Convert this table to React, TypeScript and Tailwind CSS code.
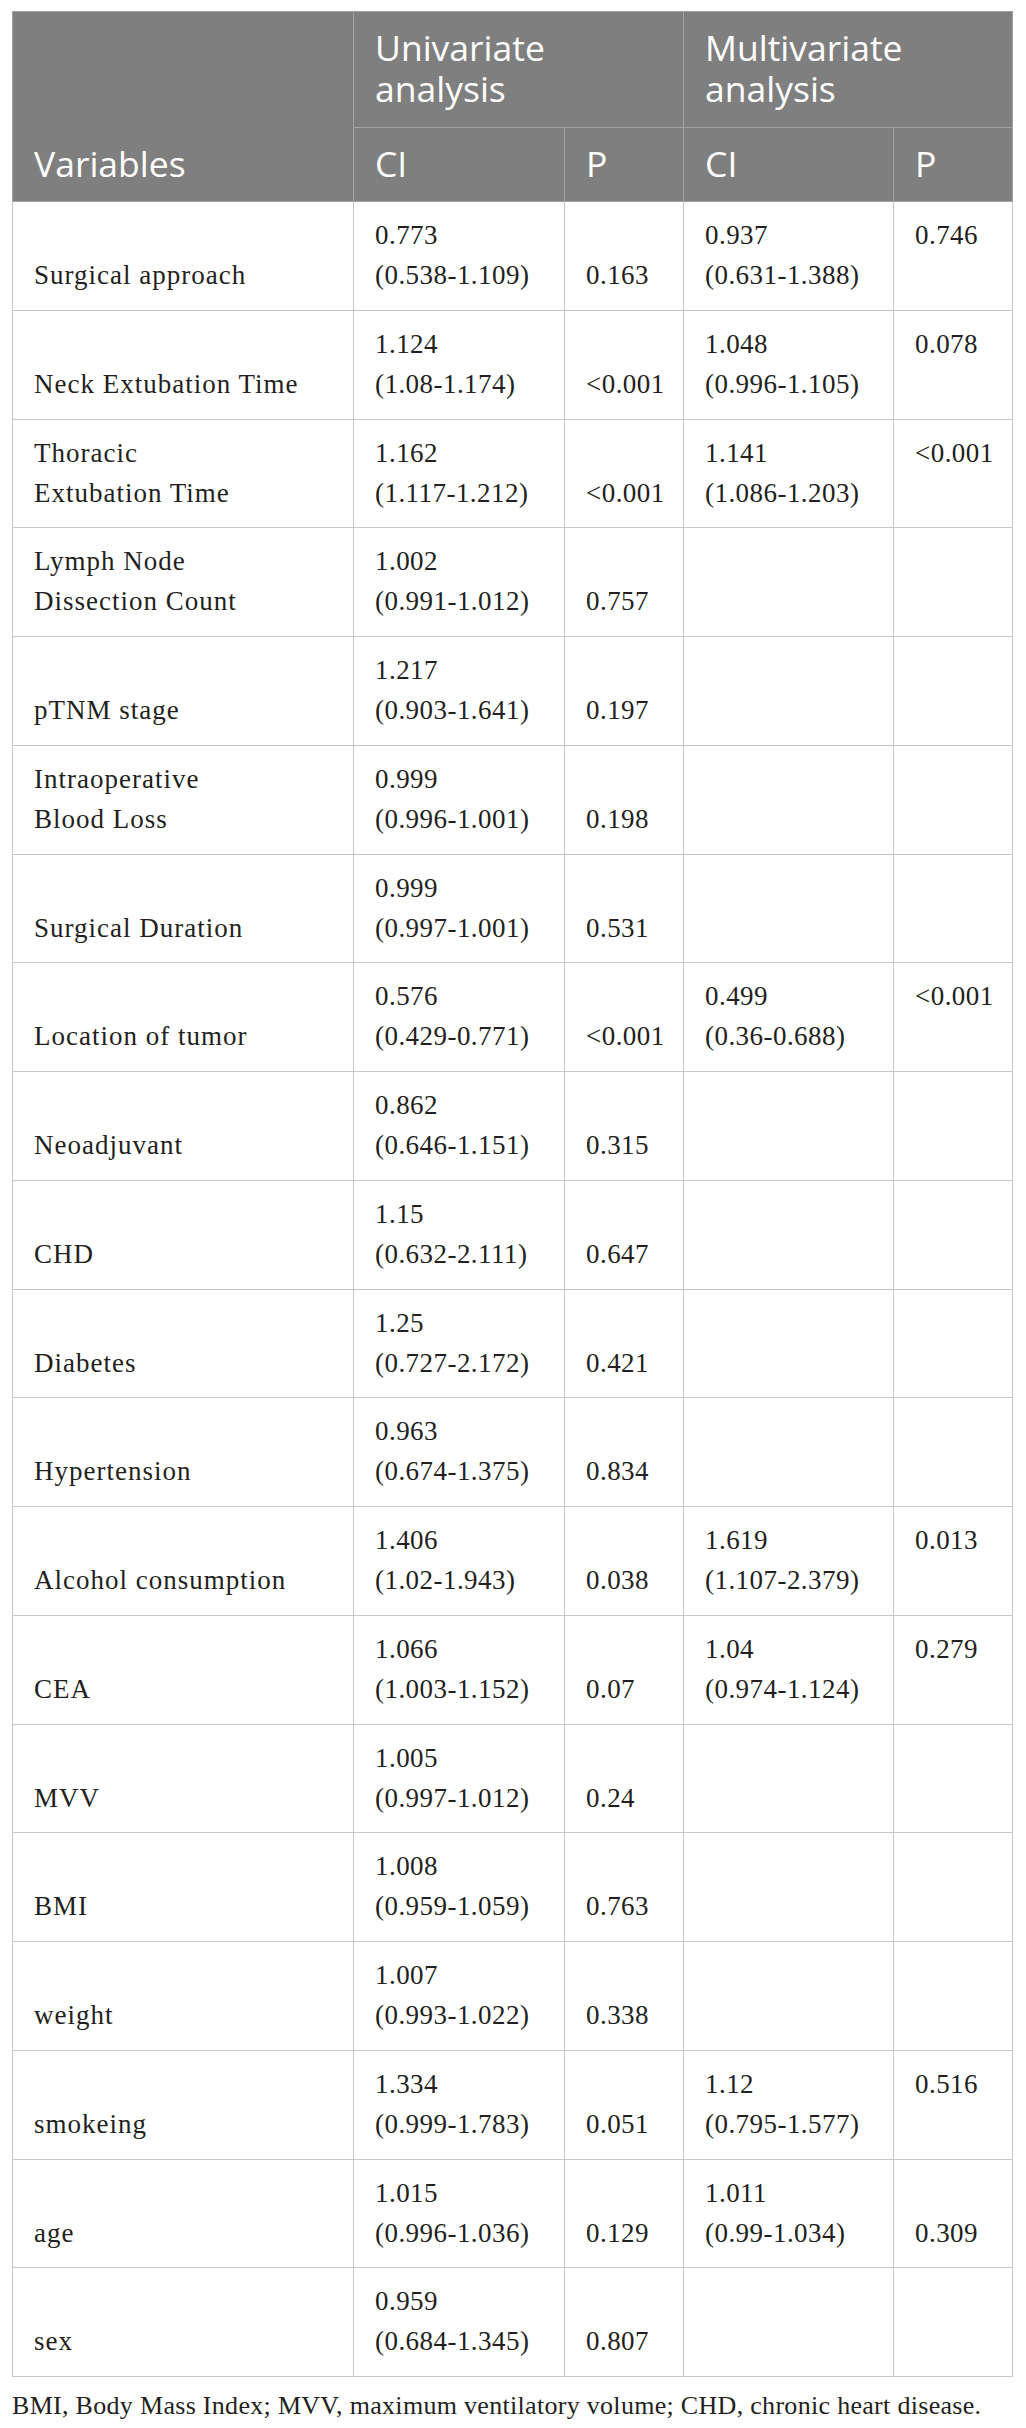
import React from "react";

type Row = {
  v: React.ReactNode;
  uci: [string, string];
  up: string;
  mci?: [string, string];
  mp?: string;
  mpBottom?: boolean;
};

const rows: Row[] = [
  { v: "Surgical approach", uci: ["0.773", "(0.538-1.109)"], up: "0.163", mci: ["0.937", "(0.631-1.388)"], mp: "0.746" },
  { v: "Neck Extubation Time", uci: ["1.124", "(1.08-1.174)"], up: "<0.001", mci: ["1.048", "(0.996-1.105)"], mp: "0.078" },
  { v: <>Thoracic<br />Extubation Time</>, uci: ["1.162", "(1.117-1.212)"], up: "<0.001", mci: ["1.141", "(1.086-1.203)"], mp: "<0.001" },
  { v: <>Lymph Node<br />Dissection Count</>, uci: ["1.002", "(0.991-1.012)"], up: "0.757" },
  { v: "pTNM stage", uci: ["1.217", "(0.903-1.641)"], up: "0.197" },
  { v: <>Intraoperative<br />Blood Loss</>, uci: ["0.999", "(0.996-1.001)"], up: "0.198" },
  { v: "Surgical Duration", uci: ["0.999", "(0.997-1.001)"], up: "0.531" },
  { v: "Location of tumor", uci: ["0.576", "(0.429-0.771)"], up: "<0.001", mci: ["0.499", "(0.36-0.688)"], mp: "<0.001" },
  { v: "Neoadjuvant", uci: ["0.862", "(0.646-1.151)"], up: "0.315" },
  { v: "CHD", uci: ["1.15", "(0.632-2.111)"], up: "0.647" },
  { v: "Diabetes", uci: ["1.25", "(0.727-2.172)"], up: "0.421" },
  { v: "Hypertension", uci: ["0.963", "(0.674-1.375)"], up: "0.834" },
  { v: "Alcohol consumption", uci: ["1.406", "(1.02-1.943)"], up: "0.038", mci: ["1.619", "(1.107-2.379)"], mp: "0.013" },
  { v: "CEA", uci: ["1.066", "(1.003-1.152)"], up: "0.07", mci: ["1.04", "(0.974-1.124)"], mp: "0.279" },
  { v: "MVV", uci: ["1.005", "(0.997-1.012)"], up: "0.24" },
  { v: "BMI", uci: ["1.008", "(0.959-1.059)"], up: "0.763" },
  { v: "weight", uci: ["1.007", "(0.993-1.022)"], up: "0.338" },
  { v: "smokeing", uci: ["1.334", "(0.999-1.783)"], up: "0.051", mci: ["1.12", "(0.795-1.577)"], mp: "0.516" },
  { v: "age", uci: ["1.015", "(0.996-1.036)"], up: "0.129", mci: ["1.011", "(0.99-1.034)"], mp: "0.309", mpBottom: true },
  { v: "sex", uci: ["0.959", "(0.684-1.345)"], up: "0.807" },
];

const th = "border border-[#a3a3a3] px-[21px] text-left font-normal text-white";
const td = "border border-[#c6c6c6] px-[21px] pt-[13px] pb-[14.75px]";

export default function App() {
  return (
    <div className="bg-white w-[1026px] pt-[11px] px-[12px]">
      <table
        className="w-[1000px] table-fixed border-collapse"
        style={{ fontFamily: "'Liberation Serif', serif" }}
      >
        <colgroup>
          <col className="w-[341px]" />
          <col className="w-[211px]" />
          <col className="w-[119px]" />
          <col className="w-[210px]" />
          <col className="w-[119px]" />
        </colgroup>
        <thead className="bg-[#7f7f7f] font-['Open_Sans',sans-serif] text-[35.5px] leading-[41px]">
          <tr>
            <th rowSpan={2} className={`${th} align-bottom pb-[17.5px]`}>Variables</th>
            <th colSpan={2} className={`${th} align-top pt-[14.5px] pb-[18.5px]`}>Univariate<br />analysis</th>
            <th colSpan={2} className={`${th} align-top pt-[14.5px] pb-[18.5px]`}>Multivariate<br />analysis</th>
          </tr>
          <tr>
            <th className={`${th} pt-[14.5px] pb-[17.5px]`}>CI</th>
            <th className={`${th} pt-[14.5px] pb-[17.5px]`}>P</th>
            <th className={`${th} pt-[14.5px] pb-[17.5px]`}>CI</th>
            <th className={`${th} pt-[14.5px] pb-[17.5px]`}>P</th>
          </tr>
        </thead>
        <tbody className="text-[27px] leading-[40px] tracking-[0.45px] text-[#231f20]">
          {rows.map((r, i) => (
            <tr key={i}>
              <td className={`${td} align-bottom tracking-[1px]`}>{r.v}</td>
              <td className={`${td} align-top`}>{r.uci[0]}<br />{r.uci[1]}</td>
              <td className={`${td} align-bottom`}>{r.up}</td>
              <td className={`${td} align-top`}>{r.mci ? <>{r.mci[0]}<br />{r.mci[1]}</> : null}</td>
              <td className={`${td} ${r.mpBottom ? "align-bottom" : "align-top"}`}>{r.mp ?? null}</td>
            </tr>
          ))}
        </tbody>
      </table>
      <p className="mt-[11px] font-['Liberation_Serif',serif] text-[26px] leading-[36px] tracking-[0.3px] text-[#231f20]">
        BMI, Body Mass Index; MVV, maximum ventilatory volume; CHD, chronic heart disease.
      </p>
    </div>
  );
}
